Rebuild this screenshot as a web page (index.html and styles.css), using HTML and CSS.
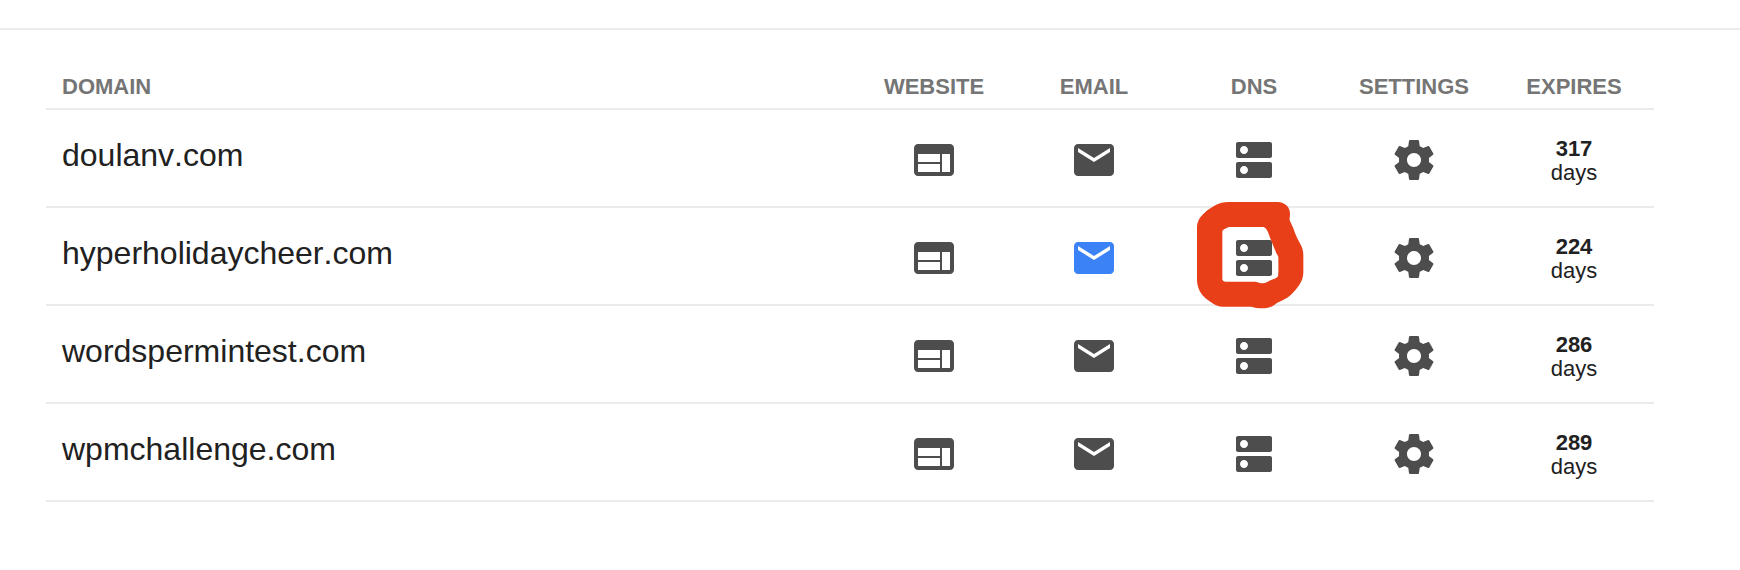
FILE: index.html
```html
<!DOCTYPE html>
<html lang="en">
<head>
<meta charset="utf-8">
<title>Domains</title>
<link rel="stylesheet" href="styles.css">
</head>
<body>
<svg class="defs" width="0" height="0" aria-hidden="true">
  <symbol id="web" viewBox="0 0 24 24"><path d="M20 4H4c-1.1 0-1.99.9-1.99 2L2 18c0 1.1.9 2 2 2h16c1.1 0 2-.9 2-2V6c0-1.1-.9-2-2-2zm-5 14H4v-4h11v4zm0-5H4V9h11v4zm5 5h-4V9h4v9z"/></symbol>
  <symbol id="mail" viewBox="0 0 24 24"><path d="M20 4H4c-1.1 0-1.99.9-1.99 2L2 18c0 1.1.9 2 2 2h16c1.1 0 2-.9 2-2V6c0-1.1-.9-2-2-2zm0 4l-8 5-8-5V6l8 5 8-5v2z"/></symbol>
  <symbol id="dns" viewBox="0 0 24 24"><path d="M20 13H4c-.55 0-1 .45-1 1v6c0 .55.45 1 1 1h16c.55 0 1-.45 1-1v-6c0-.55-.45-1-1-1zM7 19c-1.1 0-2-.9-2-2s.9-2 2-2 2 .9 2 2-.9 2-2 2zM20 3H4c-.55 0-1 .45-1 1v6c0 .55.45 1 1 1h16c.55 0 1-.45 1-1V4c0-.55-.45-1-1-1zM7 9c-1.1 0-2-.9-2-2s.9-2 2-2 2 .9 2 2-.9 2-2 2z"/></symbol>
  <symbol id="gear" viewBox="0 0 24 24"><path d="M19.43 12.98c.04-.32.07-.64.07-.98s-.03-.66-.07-.98l2.11-1.65c.19-.15.24-.42.12-.64l-2-3.46c-.12-.22-.39-.3-.61-.22l-2.49 1c-.52-.4-1.08-.73-1.69-.98l-.38-2.65C14.46 2.18 14.25 2 14 2h-4c-.25 0-.46.18-.49.42l-.38 2.65c-.61.25-1.17.59-1.69.98l-2.49-1c-.23-.09-.49 0-.61.22l-2 3.46c-.13.22-.07.49.12.64l2.11 1.65c-.04.32-.07.65-.07.98s.03.66.07.98l-2.11 1.65c-.19.15-.24.42-.12.64l2 3.46c.12.22.39.3.61.22l2.49-1c.52.4 1.08.73 1.69.98l.38 2.65c.03.24.24.42.49.42h4c.25 0 .46-.18.49-.42l.38-2.65c.61-.25 1.17-.59 1.69-.98l2.49 1c.23.09.49 0 .61-.22l2-3.46c.12-.22.07-.49-.12-.64l-2.11-1.65zM12 15.5c-1.93 0-3.5-1.57-3.5-3.5s1.57-3.5 3.5-3.5 3.5 1.57 3.5 3.5-1.57 3.5-3.5 3.5z"/></symbol>
</svg>
<header class="topbar"></header>
<main class="domains">
  <div class="row head">
    <div class="first">DOMAIN</div><div>WEBSITE</div><div>EMAIL</div><div>DNS</div><div>SETTINGS</div><div>EXPIRES</div>
  </div>
  <div class="row item">
    <div class="name">doulanv.com</div>
    <div class="cell"><svg class="icon"><use href="#web"/></svg></div>
    <div class="cell"><svg class="icon"><use href="#mail"/></svg></div>
    <div class="cell"><svg class="icon"><use href="#dns"/></svg></div>
    <div class="cell"><svg class="icon"><use href="#gear"/></svg></div>
    <div class="expires"><b>317</b><span>days</span></div>
  </div>
  <div class="row item">
    <div class="name">hyperholidaycheer.com</div>
    <div class="cell"><svg class="icon"><use href="#web"/></svg></div>
    <div class="cell"><svg class="icon active"><use href="#mail"/></svg></div>
    <div class="cell"><svg class="icon"><use href="#dns"/></svg>
      <svg class="marker" viewBox="0 0 420 390"><path fill-rule="evenodd" d="M146 36H293C316 37 330 52 330 72C330 80 328 86 329 91L340 115C347 137 356 153 363 166C369 178 370 187 370 200V245C370 266 362 281 347 299C337 311 328 320 315 327C303 333 293 337 284 344C272 352 262 355 248 355C234 355 226 354 214 350H126C113 350 103 343 91 335C68 321 52 301 51 270V112C51 94 60 80 74 68C83 59 94 53 106 46C119 38 131 36 146 36ZM148 111C141 113 132 117 127 123V267C127 272 131 275 137 275H226C235 276 240 280 248 280C256 279 262 276 268 272C278 268 289 267 294 259C296 251 295 216 295 201C293 194 288 189 286 182L270 143C266 131 260 112 250 111Z"/></svg>
    </div>
    <div class="cell"><svg class="icon"><use href="#gear"/></svg></div>
    <div class="expires"><b>224</b><span>days</span></div>
  </div>
  <div class="row item">
    <div class="name">wordspermintest.com</div>
    <div class="cell"><svg class="icon"><use href="#web"/></svg></div>
    <div class="cell"><svg class="icon"><use href="#mail"/></svg></div>
    <div class="cell"><svg class="icon"><use href="#dns"/></svg></div>
    <div class="cell"><svg class="icon"><use href="#gear"/></svg></div>
    <div class="expires"><b>286</b><span>days</span></div>
  </div>
  <div class="row item">
    <div class="name">wpmchallenge.com</div>
    <div class="cell"><svg class="icon"><use href="#web"/></svg></div>
    <div class="cell"><svg class="icon"><use href="#mail"/></svg></div>
    <div class="cell"><svg class="icon"><use href="#dns"/></svg></div>
    <div class="cell"><svg class="icon"><use href="#gear"/></svg></div>
    <div class="expires"><b>289</b><span>days</span></div>
  </div>
</main>
</body>
</html>
```

FILE: styles.css
```css
* { box-sizing: border-box; }

body {
  margin: 0;
  background: #fff;
  color: #212121;
  font-family: "Liberation Sans", Arial, sans-serif;
  font-kerning: none;
}

.defs { display: none; }

.topbar {
  height: 30px;
  border-bottom: 2px solid #ebebeb;
}

.domains {
  width: 1608px;
  margin-left: 46px;
}

.row {
  display: grid;
  grid-template-columns: 1fr repeat(5, 160px);
  border-bottom: 2px solid #ebebeb;
  text-align: center;
}

.head {
  height: 80px;
  padding-top: 45px;
  color: #757575;
  font-size: 22px;
  font-weight: bold;
  line-height: 24px;
}

.first {
  padding-left: 16px;
  text-align: left;
}

.item { height: 98px; }

.name {
  padding: 27px 0 0 16px;
  font-size: 32px;
  line-height: 36px;
  text-align: left;
}

.cell {
  position: relative;
  padding-top: 26px;
}

.icon {
  display: block;
  width: 48px;
  height: 48px;
  margin: 0 auto;
  fill: #4d4d4d;
}

.icon.active { fill: #3b82f7; }

.marker {
  position: absolute;
  z-index: 1;
  left: 6px;
  top: -18px;
  width: 140px;
  height: 130px;
  fill: #e83f19;
}

.expires {
  display: flex;
  flex-direction: column;
  padding-top: 27px;
  font-size: 22px;
  line-height: 24px;
}
```
